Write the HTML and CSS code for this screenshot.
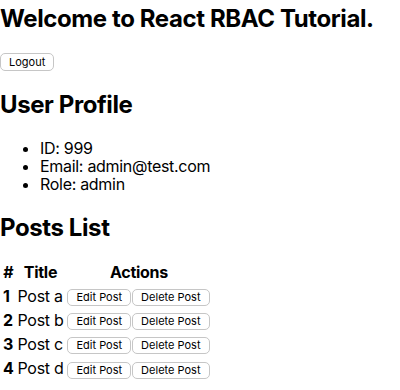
FILE: index.html
```html
<!DOCTYPE html>
<html>
<head>
<meta charset="utf-8">
<link rel="stylesheet" href="styles.css">
</head>
<body>
<div class="app">
  <h1 class="title">Welcome to React RBAC Tutorial.</h1>
  <div class="bar"><button class="btn">Logout</button></div>
  <h2 class="heading">User Profile</h2>
  <ul class="profile">
    <li>ID: 999</li>
    <li>Email: admin@test.com</li>
    <li>Role: admin</li>
  </ul>
  <h2 class="heading heading-posts">Posts List</h2>
  <table class="posts">
    <thead>
      <tr><th>#</th><th>Title</th><th>Actions</th></tr>
    </thead>
    <tbody>
      <tr><th>1</th><td>Post a</td><td class="actions"><button class="btn">Edit Post</button><button class="btn">Delete Post</button></td></tr>
      <tr><th>2</th><td>Post b</td><td class="actions"><button class="btn">Edit Post</button><button class="btn">Delete Post</button></td></tr>
      <tr><th>3</th><td>Post c</td><td class="actions"><button class="btn">Edit Post</button><button class="btn">Delete Post</button></td></tr>
      <tr><th>4</th><td>Post d</td><td class="actions"><button class="btn">Edit Post</button><button class="btn">Delete Post</button></td></tr>
    </tbody>
  </table>
</div>
</body>
</html>
```
FILE: styles.css
```css
html, body {
  margin: 0;
  padding: 0;
  background: #ffffff;
}
body {
  font-family: Inter, "Liberation Sans", sans-serif;
  font-size: 16px;
  letter-spacing: -0.3px;
  color: #000000;
}
.title {
  font-size: 24px;
  font-weight: 700;
  line-height: 28px;
  letter-spacing: -0.4px;
  margin: 5px 0 20px 0;
}
.bar {
  display: flex;
}
.btn {
  font-family: Inter, "Liberation Sans", sans-serif;
  font-size: 11px;
  letter-spacing: 0;
  line-height: 13px;
  height: 18px;
  padding: 0 8px;
  margin: 0;
  border: 1px solid #c6c6c6;
  border-radius: 5px;
  background: #ffffff;
  color: #000000;
  box-sizing: border-box;
  vertical-align: middle;
}
.heading {
  font-size: 24px;
  font-weight: 700;
  line-height: 28px;
  letter-spacing: -0.4px;
  margin: 20px 0 20px 0;
}
.profile {
  margin: 0 0 21px 0;
  padding-left: 40px;
  line-height: 18px;
}
.heading-posts {
  margin-bottom: 17px;
}
.posts {
  border-spacing: 2px;
  line-height: 20px;
}
.posts th, .posts td {
  padding: 1px;
  white-space: nowrap;
}
.posts tbody th {
  text-align: left;
}
.actions .btn {
  height: 17px;
  margin-right: 1px;
}
```
